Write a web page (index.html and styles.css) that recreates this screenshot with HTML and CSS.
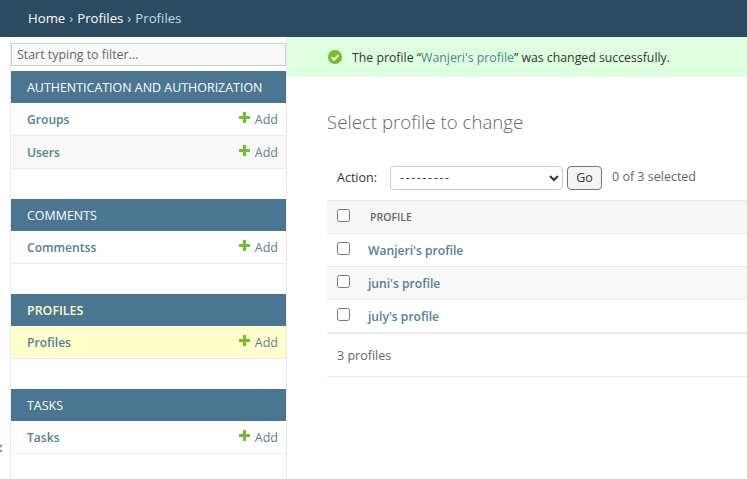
FILE: index.html
```html
<!DOCTYPE html>
<html lang="en">
<head>
<meta charset="utf-8"/>
<title>Select profile to change</title>
<link rel="stylesheet" href="styles.css">
</head>
<body>
<div class="breadcrumbs">
  <a href="#">Home</a> › <a href="#">Profiles</a> › Profiles
</div>
<div class="page">
  <button class="toggle-nav">«</button>
  <nav class="sidebar">
    <input class="nav-filter" type="search" placeholder="Start typing to filter...">

    <div class="app">
      <div class="caption">AUTHENTICATION AND AUTHORIZATION</div>
      <div class="model"><a href="#">Groups</a><a class="addlink" href="#"><svg viewBox="0 0 11 11"><path d="M4 0h3v4h4v3H7v4H4V7H0V4h4z"/></svg>Add</a></div>
      <div class="model alt"><a href="#">Users</a><a class="addlink" href="#"><svg viewBox="0 0 11 11"><path d="M4 0h3v4h4v3H7v4H4V7H0V4h4z"/></svg>Add</a></div>
    </div>

    <div class="app">
      <div class="caption">COMMENTS</div>
      <div class="model"><a href="#">Commentss</a><a class="addlink" href="#"><svg viewBox="0 0 11 11"><path d="M4 0h3v4h4v3H7v4H4V7H0V4h4z"/></svg>Add</a></div>
    </div>

    <div class="app">
      <div class="caption current">PROFILES</div>
      <div class="model selected"><a href="#">Profiles</a><a class="addlink" href="#"><svg viewBox="0 0 11 11"><path d="M4 0h3v4h4v3H7v4H4V7H0V4h4z"/></svg>Add</a></div>
    </div>

    <div class="app">
      <div class="caption">TASKS</div>
      <div class="model"><a href="#">Tasks</a><a class="addlink" href="#"><svg viewBox="0 0 11 11"><path d="M4 0h3v4h4v3H7v4H4V7H0V4h4z"/></svg>Add</a></div>
    </div>
  </nav>

  <main class="main">
    <div class="message">
      <svg class="check" viewBox="0 0 14 14"><circle cx="7" cy="7" r="7" fill="#70bf2b"/><path d="M3.6 7.2l2.5 2.5 4.4-4.6" fill="none" stroke="#fff" stroke-width="2"/></svg>
      <span>The profile “<a href="#">Wanjeri's profile</a>” was changed successfully.</span>
    </div>
    <div class="content">
      <h1>Select profile to change</h1>
      <div class="actions">
        <label>Action:</label>
        <select class="action-select"><option>---------</option></select>
        <button class="go">Go</button>
        <span class="counter">0 of 3 selected</span>
      </div>
      <table class="results">
        <thead>
          <tr><th class="check-col"><input type="checkbox"></th><th>PROFILE</th></tr>
        </thead>
        <tbody>
          <tr><td class="check-col"><input type="checkbox"></td><td><a href="#">Wanjeri's profile</a></td></tr>
          <tr class="alt"><td class="check-col"><input type="checkbox"></td><td><a href="#">juni's profile</a></td></tr>
          <tr><td class="check-col"><input type="checkbox"></td><td><a href="#">july's profile</a></td></tr>
        </tbody>
      </table>
      <p class="paginator">3 profiles</p>
    </div>
  </main>
</div>
</body>
</html>
```

FILE: styles.css
```css
html, body {
  margin: 0;
  height: 479px;
  overflow: hidden;
}
body {
  font-family: "Open Sans", "Noto Sans", sans-serif;
  font-size: 12.5px;
  color: #333;
  background: #fff;
}
a {
  color: #527f99;
  text-decoration: none;
}
.breadcrumbs {
  height: 37px;
  box-sizing: border-box;
  padding: 10px 28px;
  background: #2c4b60;
  color: #c4dce8;
  font-size: 13.2px;
  line-height: 17px;
  word-spacing: 0.6px;
}
.breadcrumbs a {
  color: #fff;
}
.page {
  display: flex;
  position: relative;
  height: 442px;
}
.toggle-nav {
  position: absolute;
  left: -7px;
  top: 400px;
  padding: 0;
  border: 0;
  background: none;
  color: #447e9b;
  font-size: 18px;
  line-height: 20px;
}
.sidebar {
  width: 275px;
  margin-left: 10px;
  border-left: 1px solid #eaeaea;
  border-right: 1px solid #eaeaea;
  padding-top: 6px;
}
.nav-filter {
  display: block;
  width: 100%;
  height: 23px;
  box-sizing: border-box;
  margin: 0 0 5px;
  padding: 2px 5px;
  border: 1px solid #ccc;
  border-radius: 0;
  background: #f8f8f8;
  font: 12.4px "Open Sans", sans-serif;
  outline: 0;
}
.nav-filter::placeholder {
  color: #666;
}
.app {
  margin-bottom: 30px;
}
.caption {
  height: 32px;
  padding: 0 16px;
  background: #4a7691;
  color: #fff;
  font-size: 12.45px;
  line-height: 33px;
}
.caption.current {
  color: #ffffc8;
  font-weight: 600;
}
.model {
  display: flex;
  justify-content: space-between;
  height: 32px;
  padding: 0 8px 0 16px;
  border-bottom: 1px solid #eaeaea;
  line-height: 33px;
  font-size: 12.1px;
  font-weight: 600;
}
.model.alt {
  background: #f8f8f8;
}
.model.selected {
  background: #ffc;
}
.addlink {
  display: flex;
  align-items: center;
  font-size: 12.5px;
  font-weight: 400;
}
.addlink svg {
  width: 11px;
  height: 11px;
  margin: -3px 5px 0 0;
  fill: #70bf2b;
}
.main {
  flex: 1;
  min-width: 0;
}
.message {
  display: flex;
  align-items: center;
  height: 40px;
  padding-left: 41px;
  background: #dfd;
  font-size: 12.3px;
}
.message .check {
  width: 14px;
  height: 14px;
  margin-right: 10px;
}
.content {
  padding: 0 0 0 40px;
}
h1 {
  margin: 32px 0 0;
  height: 57px;
  font-size: 18.7px;
  font-weight: 300;
  line-height: 25px;
  color: #666;
}
.actions {
  display: flex;
  align-items: center;
  height: 23px;
  padding-left: 10px;
  margin-bottom: 11px;
}
.actions label {
  width: 53px;
}
.action-select {
  width: 173px;
  height: 24px;
  box-sizing: border-box;
  padding: 0 5px;
  border: 1px solid #ccc;
  border-radius: 4px;
  background: #fff;
  font: 12.5px "Open Sans", sans-serif;
  letter-spacing: 1.6px;
  color: #333;
}
.go {
  width: 35px;
  height: 24px;
  margin-left: 4px;
  padding: 0;
  border: 1px solid #777;
  border-radius: 4px;
  background: #f4f4f4;
  font: 12.5px "Open Sans", sans-serif;
  color: #333;
}
.counter {
  margin: -3px 0 0 10px;
  color: #666;
}
.results {
  width: 100%;
  border-collapse: collapse;
}
.results th {
  height: 32px;
  padding: 0 8px;
  background: #f6f6f6;
  border-top: 1px solid #eaeaea;
  border-bottom: 1px solid #eaeaea;
  text-align: left;
  font-size: 10.5px;
  font-weight: 600;
  color: #666;
}
.results td {
  height: 32px;
  padding: 0 6px;
  border-bottom: 1px solid #eaeaea;
  font-size: 12.1px;
  font-weight: 600;
}
.results tr.alt td {
  background: #f8f8f8;
}
.results tbody tr:last-child td {
  border-bottom-width: 2px;
}
.results .check-col {
  width: 25px;
  padding: 0 0 0 10px;
}
.results input {
  display: block;
  width: 13px;
  height: 13px;
  margin: -3px 0 0;
}
.paginator {
  margin: 0;
  height: 42px;
  padding-left: 10px;
  border-bottom: 1px solid #eaeaea;
  line-height: 44px;
  color: #666;
}
```
